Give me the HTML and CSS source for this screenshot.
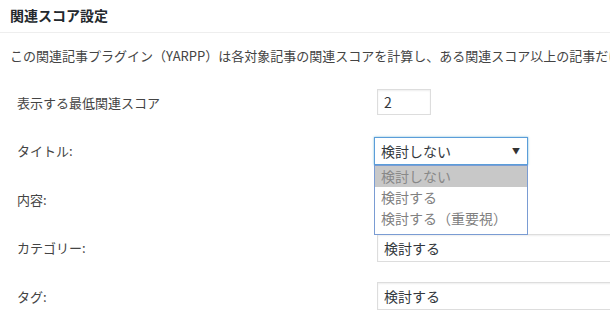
FILE: index.html
```html
<!DOCTYPE html>
<html lang="ja">
<head>
<meta charset="utf-8">
<link rel="stylesheet" href="styles.css">
</head>
<body>
<div class="panel">
  <h2 class="panel-title">関連スコア設定</h2>
  <p class="intro">この関連記事プラグイン（YARPP）は各対象記事の関連スコアを計算し、ある関連スコア以上の記事だけ</p>
  <div class="form">
    <div class="row">
      <div class="label">表示する最低関連スコア</div>
      <div class="control"><div class="num-input">2</div></div>
    </div>
    <div class="row">
      <div class="label">タイトル:</div>
      <div class="control">
        <div class="select select-open">
          <span>検討しない</span>
          <span class="arrow">▼</span>
          <ul class="dropdown">
            <li class="opt opt-hl">検討しない</li>
            <li class="opt">検討する</li>
            <li class="opt">検討する（重要視）</li>
          </ul>
        </div>
      </div>
    </div>
    <div class="row">
      <div class="label">内容:</div>
      <div class="control"><div class="select select-hidden"></div></div>
    </div>
    <div class="row">
      <div class="label">カテゴリー:</div>
      <div class="control"><div class="select select-wide"><span>検討する</span></div></div>
    </div>
    <div class="row">
      <div class="label">タグ:</div>
      <div class="control"><div class="select select-wide"><span>検討する</span></div></div>
    </div>
  </div>
</div>
</body>
</html>
```
FILE: styles.css
```css
html, body {
  margin: 0;
  padding: 0;
  background: #fff;
  overflow: hidden;
}
body {
  font-family: "Noto Sans CJK JP", "Noto Sans", sans-serif;
  color: #444;
  width: 610px;
}
.panel {
  width: 610px;
  overflow: hidden;
}
.panel-title {
  margin: 0;
  height: 32px;
  line-height: 30px;
  padding-left: 10px;
  font-size: 14px;
  font-weight: bold;
  color: #23282d;
  border-bottom: 1px solid #eee;
}
.intro {
  margin: 13px 0 0 0;
  padding-left: 10px;
  font-size: 13px;
  line-height: 20px;
  white-space: nowrap;
  overflow: hidden;
  color: #444;
}
.form {
  margin-top: 12px;
}
.row {
  display: flex;
  align-items: center;
  height: 48.5px;
}
.label {
  width: 377px;
  padding-left: 17px;
  box-sizing: border-box;
  font-size: 13px;
  color: #444;
  flex: none;
}
.control {
  flex: 1;
  min-width: 0;
}
.num-input {
  width: 54px;
  height: 26px;
  box-sizing: border-box;
  border: 1px solid #ddd;
  box-shadow: inset 0 1px 2px rgba(0,0,0,.07);
  padding-left: 6px;
  font-size: 14px;
  line-height: 24px;
  color: #32373c;
}
.select {
  position: relative;
  height: 28px;
  box-sizing: border-box;
  border: 1px solid #ddd;
  box-shadow: inset 0 1px 2px rgba(0,0,0,.07);
  padding-left: 6px;
  font-size: 14px;
  line-height: 26px;
  color: #32373c;
  display: flex;
  justify-content: space-between;
}
.select-wide {
  width: 240px;
  border-right: none;
}
.select-hidden {
  width: 154px;
  margin-left: -3px;
  border-color: transparent;
  box-shadow: none;
}
.select-open {
  width: 154px;
  margin-left: -3px;
  border: 1px solid #5b9dd9;
  box-shadow: 0 0 2px rgba(30,140,190,.6);
}
.arrow {
  font-size: 8px;
  color: #333;
  padding-right: 7px;
}
.dropdown {
  position: absolute;
  left: -1px;
  top: 27px;
  width: 154px;
  box-sizing: border-box;
  margin: 0;
  padding: 0 0 5px 0;
  list-style: none;
  background: #fff;
  border: 1px solid #7a9cd3;
  z-index: 5;
}
.opt {
  height: 21px;
  line-height: 21px;
  padding-left: 6px;
  color: #808080;
  font-size: 14px;
  white-space: nowrap;
}
.opt-hl {
  background: #c8c8c8;
  color: #888;
}
```
